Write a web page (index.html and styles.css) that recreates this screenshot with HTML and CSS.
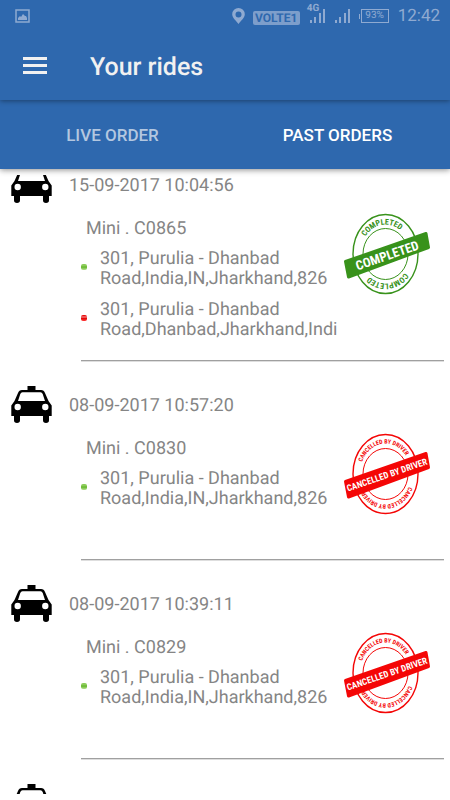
FILE: index.html
```html
<!DOCTYPE html>
<html lang="en">
<head>
<meta charset="utf-8">
<meta name="viewport" content="width=device-width, initial-scale=1">
<title>Your rides</title>
<link rel="stylesheet" href="styles.css">
</head>
<body>
<svg class="defs" aria-hidden="true">
  <symbol id="taxi" viewBox="0 0 41 37">
    <path fill="#000" fill-rule="evenodd" d="M16.500 0h8v4H30q3 0 4 3l3.500 8 3.200 4.500V30h-2.700v4.300q0 2.700-3 2.700t-3-2.700V30H9v4.300Q9 37 6 37t-3-2.700V30H0.300V19.500L3.500 15 7 7q1-3 4-3h5.500zM11.500 6.300q-1.500 0-2.200 1.700L7 15h27l-2.300-7q-.7-1.700-2.200-1.700zM6.700 17.800a3.200 3.200 0 1 0 0 6.400 3.200 3.200 0 0 0 0-6.400zM34.300 17.800a3.200 3.200 0 1 0 0 6.400 3.200 3.200 0 0 0 0-6.400z"/>
  </symbol>
  <symbol id="signal" viewBox="0 0 16 14">
    <path d="M0 11h2v3H0zM4 8h2v6H4zM9 4h2v10H9zM13 0h2v14h-2z" fill="currentColor"/>
  </symbol>
</svg>
<div class="app">
  <header class="top">
    <div class="status">
      <svg class="picture" viewBox="0 0 15 14"><path d="M1 1h13v12H1z" fill="none" stroke="currentColor" stroke-width="1.500"/><path d="M3 11V9l2-2 1 1 2-3 2 2h1l1 2v2z" fill="currentColor"/></svg>
      <svg class="pin" viewBox="0 0 13 16"><path fill="currentColor" fill-rule="evenodd" d="M6.500 0a6.300 6.300 0 0 0-6.300 6.300C.2 10 4 12.500 6.500 16 9 12.500 12.800 10 12.800 6.300A6.300 6.300 0 0 0 6.500 0zm0 3.500a3 3 0 1 1 0 6 3 3 0 0 1 0-6z"/></svg>
      <span class="volte">VOLTE1</span>
      <span class="cell"><span class="net">4G</span><svg class="signal"><use href="#signal"/></svg></span>
      <svg class="signal second"><use href="#signal"/></svg>
      <span class="battery">93%</span>
      <span class="clock">12:42</span>
    </div>
    <div class="toolbar">
      <button class="menu" aria-label="Menu"><svg viewBox="0 0 24 18"><path d="M0 0h24v3H0zM0 7h24v3H0zM0 14h24v3H0z" fill="currentColor"/></svg></button>
      <h1>Your rides</h1>
    </div>
  </header>
  <nav class="tabs">
    <button class="tab">LIVE ORDER</button>
    <button class="tab active">PAST ORDERS</button>
  </nav>
  <main class="rides">
    <article class="ride">
      <div class="when"><svg class="taxi"><use href="#taxi"/></svg><time>15-09-2017 10:04:56</time></div>
      <div class="body">
        <div class="details">
          <p class="car">Mini . C0865</p>
          <p class="stop from">301, Purulia - Dhanbad<br>Road,India,IN,Jharkhand,826</p>
          <p class="stop to">301, Purulia - Dhanbad<br>Road,Dhanbad,Jharkhand,Indi</p>
        </div>
        <svg class="stamp completed" viewBox="0 0 86 82">
          <ellipse class="ring" cx="41.500" cy="41" rx="32.500" ry="39.500"/>
          <ellipse class="ring inner" cx="41.500" cy="41" rx="22.500" ry="25.500"/>
          <path id="c-top" class="guide" d="M16.500 41a25 29.500 0 0 1 50 0"/>
          <path id="c-bottom" class="guide" d="M66.500 41a25 29.500 0 0 1 -50 0"/>
          <text class="arc"><textPath href="#c-top" startOffset="45%">COMPLETED</textPath></text>
          <text class="arc"><textPath href="#c-bottom" startOffset="47%">COMPLETED</textPath></text>
          <path class="band" d="M1.500 48.500 82 20.500 84.500 34.500 4.500 64z"/>
          <text class="label" transform="rotate(-19 43 42)" x="43" y="47">COMPLETED</text>
        </svg>
      </div>
    </article>
    <article class="ride">
      <div class="when"><svg class="taxi"><use href="#taxi"/></svg><time>08-09-2017 10:57:20</time></div>
      <div class="body">
        <div class="details">
          <p class="car">Mini . C0830</p>
          <p class="stop from">301, Purulia - Dhanbad<br>Road,India,IN,Jharkhand,826</p>
          <p class="stop"></p>
        </div>
        <svg class="stamp cancelled" viewBox="0 0 86 82">
          <ellipse class="ring" cx="41.500" cy="41" rx="32.500" ry="39.500"/>
          <ellipse class="ring inner" cx="41.500" cy="41" rx="22.500" ry="25.500"/>
          <path id="d-top" class="guide" d="M16 41a25.500 30.500 0 0 1 51 0"/>
          <path id="d-bottom" class="guide" d="M67 41a25.500 30.500 0 0 1 -51 0"/>
          <text class="arc"><textPath href="#d-top" startOffset="46%">CANCELLED BY DRIVER</textPath></text>
          <text class="arc"><textPath href="#d-bottom" startOffset="47%">CANCELLED BY DRIVER</textPath></text>
          <path class="band" d="M1.500 48.500 82 20.500 84.500 34.500 4.500 64z"/>
          <text class="label" transform="rotate(-19 43 42)" x="43" y="45">CANCELLED BY DRIVER</text>
        </svg>
      </div>
    </article>
    <article class="ride">
      <div class="when"><svg class="taxi"><use href="#taxi"/></svg><time>08-09-2017 10:39:11</time></div>
      <div class="body">
        <div class="details">
          <p class="car">Mini . C0829</p>
          <p class="stop from">301, Purulia - Dhanbad<br>Road,India,IN,Jharkhand,826</p>
          <p class="stop"></p>
        </div>
        <svg class="stamp cancelled" viewBox="0 0 86 82">
          <ellipse class="ring" cx="41.500" cy="41" rx="32.500" ry="39.500"/>
          <ellipse class="ring inner" cx="41.500" cy="41" rx="22.500" ry="25.500"/>
          <text class="arc"><textPath href="#d-top" startOffset="46%">CANCELLED BY DRIVER</textPath></text>
          <text class="arc"><textPath href="#d-bottom" startOffset="47%">CANCELLED BY DRIVER</textPath></text>
          <path class="band" d="M1.500 48.500 82 20.500 84.500 34.500 4.500 64z"/>
          <text class="label" transform="rotate(-19 43 42)" x="43" y="45">CANCELLED BY DRIVER</text>
        </svg>
      </div>
    </article>
    <article class="ride">
      <div class="when"><svg class="taxi"><use href="#taxi"/></svg></div>
    </article>
  </main>
</div>
</body>
</html>
```
FILE: styles.css
```css
* { box-sizing: border-box; }
body { margin: 0; font-family: Roboto, "Liberation Sans", sans-serif; text-rendering: geometricPrecision; background: #fff; color: #858585; }
button { border: 0; padding: 0; background: none; font: inherit; color: inherit; }
p, h1 { margin: 0; }
.defs { position: absolute; width: 0; height: 0; }
.app { height: 100vh; display: flex; flex-direction: column; }

.top { position: relative; z-index: 2; background: #2e68ae; box-shadow: 0 1px 5px rgba(0, 0, 0, 0.4); }
.status { height: 32px; padding: 0 10px 0 15px; display: flex; align-items: center; color: #8faad1; }
.picture { width: 15px; height: 14px; }
.pin { width: 13px; height: 16px; margin-left: auto; }
.volte { margin: 4px 0 0 8px; width: 47px; height: 14px; border-radius: 2px; background: #7d9ecb; color: #2e68ae; font-size: 12px; font-weight: 700; line-height: 14px; text-align: center; }
.cell { position: relative; display: flex; margin-left: 10px; }
.net { position: absolute; left: -3px; top: -5px; font-size: 10px; line-height: 10px; font-weight: 700; }
.signal { width: 16px; height: 14px; }
.signal.second { margin-left: 9px; }
.battery { position: relative; margin-left: 10px; width: 28px; height: 14px; border: 1px solid currentColor; font-size: 10px; line-height: 12px; text-align: center; }
.battery::before { content: ""; position: absolute; left: -3px; top: 4px; width: 1px; height: 5px; background: currentColor; }
.clock { margin-left: 9px; font-size: 17px; line-height: 20px; }
.toolbar { height: 68px; padding: 0 23px; display: flex; align-items: center; color: #f1f1f1; }
.menu { width: 24px; height: 18px; margin-right: 43px; }
.menu svg { display: block; width: 24px; height: 18px; }
h1 { padding-top: 3px; font-size: 25px; line-height: 30px; font-weight: 500; }

.tabs { position: relative; z-index: 1; height: 69px; display: flex; background: #2e68ae; box-shadow: 0 1px 6px rgba(0, 0, 0, 0.45); }
.tab { flex: 1; padding-top: 1px; font-size: 17px; font-weight: 500; color: #b3c7e0; }
.tab.active { color: #fff; }

.rides { flex: 1; min-height: 0; overflow: hidden; margin: 6px 0; }
.ride:first-child { margin-top: -9px; }
.ride { padding-bottom: 25px; font-size: 18px; line-height: 20px; }
.when { display: flex; align-items: center; gap: 17px; height: 37px; padding-left: 11px; }
.when time { padding-top: 2px; }
.taxi { width: 41px; height: 37px; }
.body { display: grid; grid-template-columns: 1fr 86px; margin: 10px 6px 0 81px; padding: 0 14px 20px 0; border-bottom: 1px solid #a0a0a0; box-shadow: 0 1px #dedede; }
.details { padding-top: 6px; }
.car { padding-left: 5px; margin-bottom: 10px; }
.stop { position: relative; padding-left: 19px; min-height: 19px; white-space: nowrap; }
.stop + .stop { margin-top: 11px; }
.from::before, .to::before { content: ""; position: absolute; left: 0; top: 15px; width: 6px; height: 6px; border-radius: 2px; background: linear-gradient(#8ccc5a 30%, #63b62c 50%, #b5e08f); }
.to::before { background: linear-gradient(#e81010 15%, #f59a9a 35%, #e00000 50%, #ff3a3a); }

.stamp { width: 86px; height: 82px; overflow: visible; font-family: "Liberation Sans Narrow", "Roboto Condensed", Roboto, sans-serif; font-weight: 700; }
.ring { fill: none; stroke: currentColor; stroke-width: 1.4; }
.inner { stroke-width: 1; }
.guide { fill: none; }
.arc { fill: currentColor; text-anchor: middle; }
.band { fill: currentColor; stroke: currentColor; stroke-width: 3; stroke-linejoin: round; }
.label { fill: #fff; text-anchor: middle; }
.completed { color: #38921b; }
.completed .arc { font-size: 8px; }
.completed .label { font-size: 13px; }
.cancelled { color: #f40606; }
.cancelled .arc { font-size: 6px; }
.cancelled .label { font-size: 9px; }
```
